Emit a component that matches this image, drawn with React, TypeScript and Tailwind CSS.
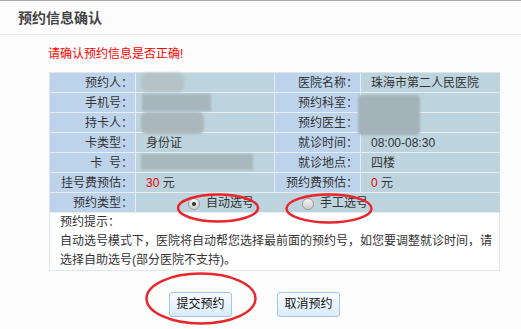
import React from "react";

const font = "font-['Liberation_Sans','Noto_Sans_CJK_SC',sans-serif]";

function Label({ children }: { children: React.ReactNode }) {
  return (
    <div className="h-[19px] bg-[#bdd3ec] text-right pr-[2px] text-[12px] leading-[21px] text-[#333] whitespace-nowrap">
      {children}
    </div>
  );
}

function Value({ children }: { children?: React.ReactNode }) {
  return (
    <div className="h-[19px] bg-[#bdd4de] pl-[10px] text-[12px] leading-[21px] text-[#333] whitespace-nowrap">
      {children}
    </div>
  );
}

function Radio({ checked, label }: { checked?: boolean; label: string }) {
  return (
    <span className="inline-flex items-center gap-[6px]">
      <span className="w-[12px] h-[12px] rounded-full border border-[#9a9a9a] bg-linear-to-b from-[#f4f4f4] to-[#cfcfcf] flex items-center justify-center">
        {checked && <span className="w-[4px] h-[4px] rounded-full bg-[#333]" />}
      </span>
      <span>{label}</span>
    </span>
  );
}

function Button({ children }: { children: React.ReactNode }) {
  return (
    <button className="w-[63px] h-[25px] rounded-[3px] border border-[#a3c5e6] bg-linear-to-b from-[#fafcfe] to-[#d9ecfa] text-[12px] text-[#111] leading-[23px]">
      {children}
    </button>
  );
}

export default function App() {
  return (
    <div className={`relative w-[521px] h-[329px] overflow-hidden bg-[#fdfdfd] border-t border-[#a8a8a8] ${font}`}>
      <div className="h-[34px] border-b border-[#ececec] flex items-center pl-[18px] pt-[2px] text-[14px] font-bold text-[#444]">
        预约信息确认
      </div>

      <div className="mt-[9px] pl-[48px] text-[12px] leading-[20px] text-[#f00]">请确认预约信息是否正确!</div>

      <div className="relative mt-[8px] ml-[49px] w-[451px] border border-[#dfe6ea] bg-white">
        <div className="grid grid-cols-[85px_138px_85px_139px] gap-px bg-[#e6eef2]">
          <Label>预约人：</Label>
          <Value />
          <Label>医院名称：</Label>
          <Value>珠海市第二人民医院</Value>

          <Label>手机号：</Label>
          <Value />
          <Label>预约科室：</Label>
          <Value />

          <Label>持卡人：</Label>
          <Value />
          <Label>预约医生：</Label>
          <Value />

          <Label>卡类型：</Label>
          <Value>身份证</Value>
          <Label>就诊时间：</Label>
          <Value>08:00-08:30</Value>

          <Label>卡&nbsp;&nbsp;号：</Label>
          <Value />
          <Label>就诊地点：</Label>
          <Value>四楼</Value>

          <Label>挂号费预估：</Label>
          <Value>
            <span className="text-[#e00]">30</span> 元
          </Value>
          <Label>预约费预估：</Label>
          <Value>
            <span className="text-[#e00]">0</span> 元
          </Value>

          <Label>预约类型：</Label>
          <div className="col-span-3 h-[19px] bg-[#bdd4de] pl-[52px] pt-[2px] text-[12px] leading-[17px] text-[#333] flex items-center gap-[48px]">
            <Radio checked label="自动选号" />
            <Radio label="手工选号" />
          </div>
        </div>

        <div className="border-t border-[#e6eef2] pl-[10px] text-[12px] leading-[19px] text-[#333]">
          <div>预约提示：</div>
          <div>自动选号模式下，医院将自动帮您选择最前面的预约号，如您要调整就诊时间，请</div>
          <div>选择自助选号(部分医院不支持)。</div>
        </div>

        {/* mosaic over personal data */}
        <div className="absolute left-[91px] top-[0px] w-[43px] h-[19px] rounded-[6px] bg-[#b5c2c7] blur-[1.5px]" />
        <div className="absolute left-[92px] top-[21px] w-[69px] h-[17px] bg-[#a7b6bc] blur-[1px]" />
        <div className="absolute left-[91px] top-[39px] w-[63px] h-[22px] rounded-[6px] bg-[#aab8bd] blur-[1px]" />
        <div className="absolute left-[91px] top-[81px] w-[112px] h-[16px] bg-[#a9b8bd] blur-[1px]" />
        <div className="absolute left-[308px] top-[22px] w-[62px] h-[40px] rounded-[4px] bg-[#a4b3b9] blur-[1px]" />
      </div>

      <div className="mt-[21px] ml-[169px] flex gap-[45px]">
        <Button>提交预约</Button>
        <Button>取消预约</Button>
      </div>

      <svg className="absolute inset-0 pointer-events-none" width="521" height="329">
        <g fill="none" stroke="#e8262c" strokeWidth="2.5">
          <ellipse cx="218" cy="207" rx="40" ry="13.5" />
          <ellipse cx="329" cy="207.5" rx="42.5" ry="14" />
          <ellipse cx="201" cy="297.5" rx="54.5" ry="25" />
        </g>
      </svg>
    </div>
  );
}
